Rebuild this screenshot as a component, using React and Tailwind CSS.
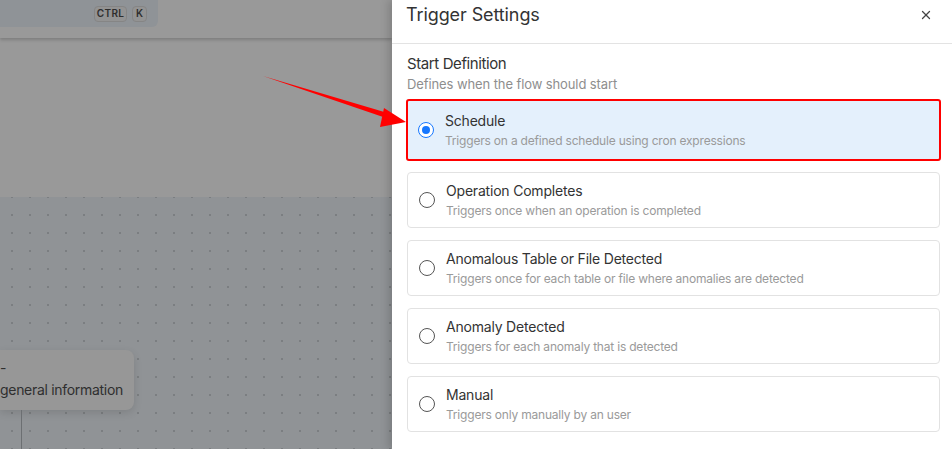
import React from 'react';
import { X } from 'lucide-react';

const options = [
  { title: 'Schedule', desc: 'Triggers on a defined schedule using cron expressions', selected: true },
  { title: 'Operation Completes', desc: 'Triggers once when an operation is completed' },
  { title: 'Anomalous Table or File Detected', desc: 'Triggers once for each table or file where anomalies are detected' },
  { title: 'Anomaly Detected', desc: 'Triggers for each anomaly that is detected' },
  { title: 'Manual', desc: 'Triggers only manually by an user' },
];

const Radio = ({ checked }) => (
  <span
    className={
      checked
        ? 'flex h-[16px] w-[16px] shrink-0 items-center justify-center rounded-full border-[1.5px] border-[#1677ff] bg-white'
        : 'flex h-[16px] w-[16px] shrink-0 items-center justify-center rounded-full border-[1.5px] border-[#555] bg-white'
    }
  >
    {checked && <span className="h-[8px] w-[8px] rounded-full bg-[#1677ff]" />}
  </span>
);

const OptionCard = ({ title, desc, selected }) => (
  <div
    className={
      selected
        ? 'flex h-[60px] items-center gap-[11px] rounded-[2px] bg-[#e4f0fc] px-[11px] outline outline-[2px] outline-[#ff0000] -outline-offset-[1px]'
        : 'flex h-[56px] items-center gap-[11px] rounded-[4px] border border-[#e2e2e2] bg-white px-[11px]'
    }
  >
    <Radio checked={selected} />
    <div className="flex flex-col">
      <span className="text-[14px] leading-[18px] tracking-[-0.2px] text-[#333]">{title}</span>
      <span className="mt-[3px] text-[12px] leading-[15px] tracking-[-0.2px] text-[#9a9a9a]">{desc}</span>
    </div>
  </div>
);

export default function App() {
  return (
    <div className="relative flex h-[449px] w-[952px] overflow-hidden bg-white font-['Inter',sans-serif]">
      {/* Dimmed app behind the drawer */}
      <div className="flex w-[392px] shrink-0 flex-col">
        <div className="relative z-10 flex h-[38px] shrink-0 bg-[#999999] shadow-[0_2px_3px_rgba(0,0,0,0.18)]">
          <div className="flex h-[27px] w-[158px] items-center justify-end gap-[5px] rounded-br-[6px] bg-[#8f9397] pr-[11px]">
            <span className="flex h-[16px] w-[33px] items-center justify-center rounded-[4px] border border-[#858585] bg-[#939393] text-[10px] font-semibold tracking-[0.4px] text-[#2e2e2e]">
              CTRL
            </span>
            <span className="flex h-[16px] w-[15px] items-center justify-center rounded-[4px] border border-[#858585] bg-[#939393] text-[10px] font-semibold text-[#2e2e2e]">
              K
            </span>
          </div>
        </div>
        <div className="h-[159px] shrink-0 bg-[#999999]" />
        <div className="relative flex-1 bg-[#909396] bg-[radial-gradient(#7b7e81_1px,transparent_1.2px)] bg-[size:18px_18px] bg-[position:3px_9px] pt-[153px]">
          <div className="flex h-[60px] w-[134px] flex-col justify-center rounded-r-[8px] bg-[#979797] shadow-[0_3px_8px_rgba(0,0,0,0.12)]">
            <span className="text-[14px] leading-[14px] text-[#2f2f2f]">-</span>
            <span className="mt-[6px] text-[14px] leading-[18px] tracking-[-0.3px] text-[#2f2f2f]">general information</span>
          </div>
          <div className="ml-[21px] h-full w-[1px] bg-[#6c6f72]" />
        </div>
      </div>

      {/* Trigger settings drawer */}
      <div className="z-10 flex flex-1 flex-col bg-white shadow-[-4px_0_8px_rgba(0,0,0,0.15)]">
        <div className="flex h-[44px] shrink-0 items-center justify-between border-b border-[#e3e3e3] pl-[14px] pr-[22px] pb-[14px] pt-0">
          <h2 className="text-[18px] leading-[24px] tracking-[-0.1px] text-[#333]">Trigger Settings</h2>
          <X className="h-[14px] w-[14px] text-[#444]" strokeWidth={2.2} />
        </div>
        <div className="flex flex-col px-[15px] pt-[10px]">
          <h3 className="text-[15px] leading-[20px] tracking-[-0.4px] text-[#333]">Start Definition</h3>
          <p className="mt-[2px] text-[13px] leading-[17px] tracking-[-0.1px] text-[#8e8e8e]">Defines when the flow should start</p>
          <div className="mt-[7px] flex w-[533px] flex-col gap-[12px]">
            {options.map((o) => (
              <OptionCard key={o.title} {...o} />
            ))}
          </div>
        </div>
      </div>

      {/* Annotation arrow */}
      <svg className="pointer-events-none absolute left-0 top-0 z-20" width="952" height="449">
        <polygon points="263,76 391,114 389,119" fill="#ff0000" />
        <polygon points="384,108 406,122 380,127" fill="#ff0000" />
      </svg>
    </div>
  );
}
